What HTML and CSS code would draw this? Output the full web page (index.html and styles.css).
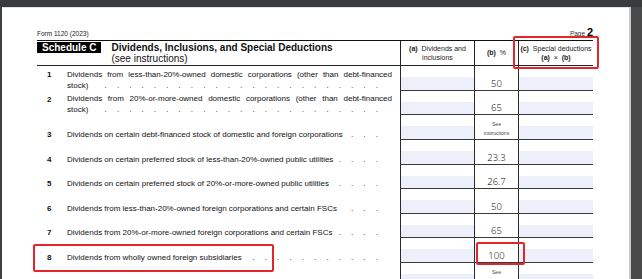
FILE: index.html
```html
<!DOCTYPE html>
<html lang="en">
<head>
<meta charset="utf-8">
<title>Form 1120 (2023) Schedule C</title>
<link rel="stylesheet" href="styles.css">
</head>
<body>
<div class="viewer">
  <div class="topbar"></div>
  <div class="stage">
    <div class="edge-left"></div>
    <div class="page">
      <div class="form">
        <div class="formhead">
          <span class="formname">Form 1120 (2023)</span>
          <span class="pageno">Page <b>2</b></span>
        </div>

        <div class="schedhead">
          <div class="titlebox">
            <span class="schedtag">Schedule C</span>
            <div class="schedtitle">
              <div class="t1">Dividends, Inclusions, and Special Deductions</div>
              <div class="t2">(see instructions)</div>
            </div>
          </div>
          <div class="colhead"><span><b>(a)</b>&nbsp; Dividends and<br>inclusions</span></div>
          <div class="colhead"><span><b>(b)</b>&nbsp; %</span></div>
          <div class="colhead"><span><b>(c)</b>&nbsp; Special deductions<br><b>(a)</b> &nbsp;×&nbsp; <b>(b)</b></span></div>
        </div>

        <div class="row">
          <div class="num top">1</div>
          <div class="desc two">
            <span class="l1">Dividends from less-than-20%-owned domestic corporations (other than debt-financed</span>
            <span class="l2"><span>stock)</span><span class="lead"></span></span>
          </div>
          <div class="amt"></div>
          <div class="pct"><span class="val">50</span></div>
          <div class="amt"></div>
        </div>

        <div class="row">
          <div class="num top">2</div>
          <div class="desc two">
            <span class="l1">Dividends from 20%-or-more-owned domestic corporations (other than debt-financed</span>
            <span class="l2"><span>stock)</span><span class="lead"></span></span>
          </div>
          <div class="amt"></div>
          <div class="pct"><span class="val">65</span></div>
          <div class="amt"></div>
        </div>

        <div class="row">
          <div class="num">3</div>
          <div class="desc"><span>Dividends on certain debt-financed stock of domestic and foreign corporations</span><span class="lead"></span></div>
          <div class="amt"></div>
          <div class="pct see"><span>See<br>instructions</span></div>
          <div class="amt"></div>
        </div>

        <div class="row">
          <div class="num">4</div>
          <div class="desc"><span>Dividends on certain preferred stock of less-than-20%-owned public utilities</span><span class="lead"></span></div>
          <div class="amt"></div>
          <div class="pct"><span class="val">23.3</span></div>
          <div class="amt"></div>
        </div>

        <div class="row">
          <div class="num">5</div>
          <div class="desc"><span>Dividends on certain preferred stock of 20%-or-more-owned public utilities</span><span class="lead"></span></div>
          <div class="amt"></div>
          <div class="pct"><span class="val">26.7</span></div>
          <div class="amt"></div>
        </div>

        <div class="row">
          <div class="num">6</div>
          <div class="desc"><span>Dividends from less-than-20%-owned foreign corporations and certain FSCs</span><span class="lead"></span></div>
          <div class="amt"></div>
          <div class="pct"><span class="val">50</span></div>
          <div class="amt"></div>
        </div>

        <div class="row">
          <div class="num">7</div>
          <div class="desc"><span>Dividends from 20%-or-more-owned foreign corporations and certain FSCs</span><span class="lead"></span></div>
          <div class="amt"></div>
          <div class="pct"><span class="val">65</span></div>
          <div class="amt"></div>
        </div>

        <div class="row">
          <div class="num">8</div>
          <div class="desc"><span>Dividends from wholly owned foreign subsidiaries</span><span class="lead"></span></div>
          <div class="amt"></div>
          <div class="pct"><span class="val">100</span></div>
          <div class="amt"></div>
        </div>

        <div class="row tall">
          <div class="num"></div>
          <div class="desc"></div>
          <div class="amt"></div>
          <div class="pct see"><span>See<br>instructions</span></div>
          <div class="amt"></div>
        </div>
      </div>
    </div>
    <div class="edge-right"></div>
  </div>

  <div class="mark mark-c"></div>
  <div class="mark mark-8"></div>
  <div class="mark mark-100"></div>
</div>
</body>
</html>
```

FILE: styles.css
```css
* { box-sizing: border-box; }

html, body {
  margin: 0;
  padding: 0;
}

body {
  font-family: "Liberation Sans", Arial, sans-serif;
  color: #111;
  background: #3c3c3e;
}

.viewer {
  position: relative;
  width: 642px;
  height: 279px;
  overflow: hidden;
  display: grid;
  grid-template-rows: 7px 1fr;
  background: #3c3c3e;
}

.topbar {
  background: #3a3b3d;
}

.stage {
  display: grid;
  grid-template-columns: 2px 627px 1fr;
  min-height: 0;
}

.edge-left {
  background: #3f3f41;
}

.edge-right {
  background: #4a4a4b;
  border-left: 2px solid #c9c9c9;
}

.page {
  background: #fff;
  border-top: 1px solid #e2e2e2;
  padding: 19px 0 0 35px;
  overflow: hidden;
}

.form {
  width: 556px;
}

/* top line: form name + page number */
.formhead {
  display: flex;
  justify-content: space-between;
  align-items: baseline;
  height: 13px;
  line-height: 11px;
}

.formname {
  font-size: 6.5px;
  color: #222;
}

.pageno {
  font-size: 6.5px;
  color: #333;
}

.pageno b {
  font-size: 11px;
  color: #000;
}

/* schedule heading */
.schedhead {
  display: grid;
  grid-template-columns: 363px 74px 44px 75px;
  height: 26px;
  border-top: 1px solid #111;
  border-bottom: 1px solid #222;
}

.titlebox {
  display: flex;
  align-items: flex-start;
  padding-top: 1px;
}

.schedtag {
  background: #000;
  color: #fff;
  font-weight: bold;
  font-size: 10px;
  line-height: 11px;
  height: 11px;
  padding: 0 5px;
}

.schedtitle {
  margin-left: 10px;
  font-size: 10px;
  line-height: 11px;
}

.schedtitle .t1 {
  font-weight: bold;
}

.colhead {
  border-left: 1px solid #222;
  display: flex;
  align-items: center;
  justify-content: center;
  text-align: center;
  font-size: 7px;
  line-height: 9px;
  padding-bottom: 1px;
  color: #222;
}

/* data rows */
.row {
  display: grid;
  grid-template-columns: 30px 333px 74px 44px 75px;
  height: 24.625px;
}

.row.tall {
  height: 40px;
}

.num {
  display: flex;
  align-items: flex-end;
  padding: 0 0 0 10px;
  font-weight: bold;
  font-size: 8px;
  line-height: 11px;
}

.num.top {
  align-items: flex-start;
  padding-top: 3px;
}

.desc {
  display: flex;
  align-items: flex-end;
  padding: 0 8px 0 0;
  font-size: 8px;
  line-height: 11px;
  white-space: nowrap;
}

.desc.two {
  flex-direction: column;
  align-items: stretch;
  justify-content: flex-end;
}

.desc .l1 {
  display: block;
  text-align: justify;
  text-align-last: justify;
}

.desc .l2 {
  display: flex;
}

.lead {
  flex: 1;
  min-width: 0;
  overflow: hidden;
  white-space: nowrap;
  direction: rtl;
  margin: 0 4px 0 6px;
  letter-spacing: 10.1px;
}

.lead::after {
  content: "............................................";
}

.amt {
  border-left: 1px solid #2a2a2a;
  border-bottom: 1px solid #3a3a3a;
  background: linear-gradient(to bottom, #fff 0 11px, #edf0fb 11px);
}

.pct {
  border-left: 1px solid #2a2a2a;
  border-bottom: 1px solid #3a3a3a;
  display: flex;
  align-items: flex-end;
  justify-content: center;
  padding-bottom: 1px;
}

.pct .val {
  font-family: "Open Sans", "DejaVu Sans", sans-serif;
  font-weight: 300;
  font-size: 9.5px;
  line-height: 11px;
  color: #000;
}

.pct.see {
  align-items: flex-start;
  padding: 5px 0 0;
  text-align: center;
  font-size: 5px;
  line-height: 8.5px;
  color: #444;
}

/* red annotation boxes drawn over the page */
.mark {
  position: absolute;
  border: 2px solid #e3262b;
  border-radius: 2px;
}

.mark-c {
  left: 513px;
  top: 36px;
  width: 86px;
  height: 33px;
}

.mark-8 {
  left: 33px;
  top: 244px;
  width: 241px;
  height: 28px;
}

.mark-100 {
  left: 476px;
  top: 242px;
  width: 49px;
  height: 23px;
}
```
